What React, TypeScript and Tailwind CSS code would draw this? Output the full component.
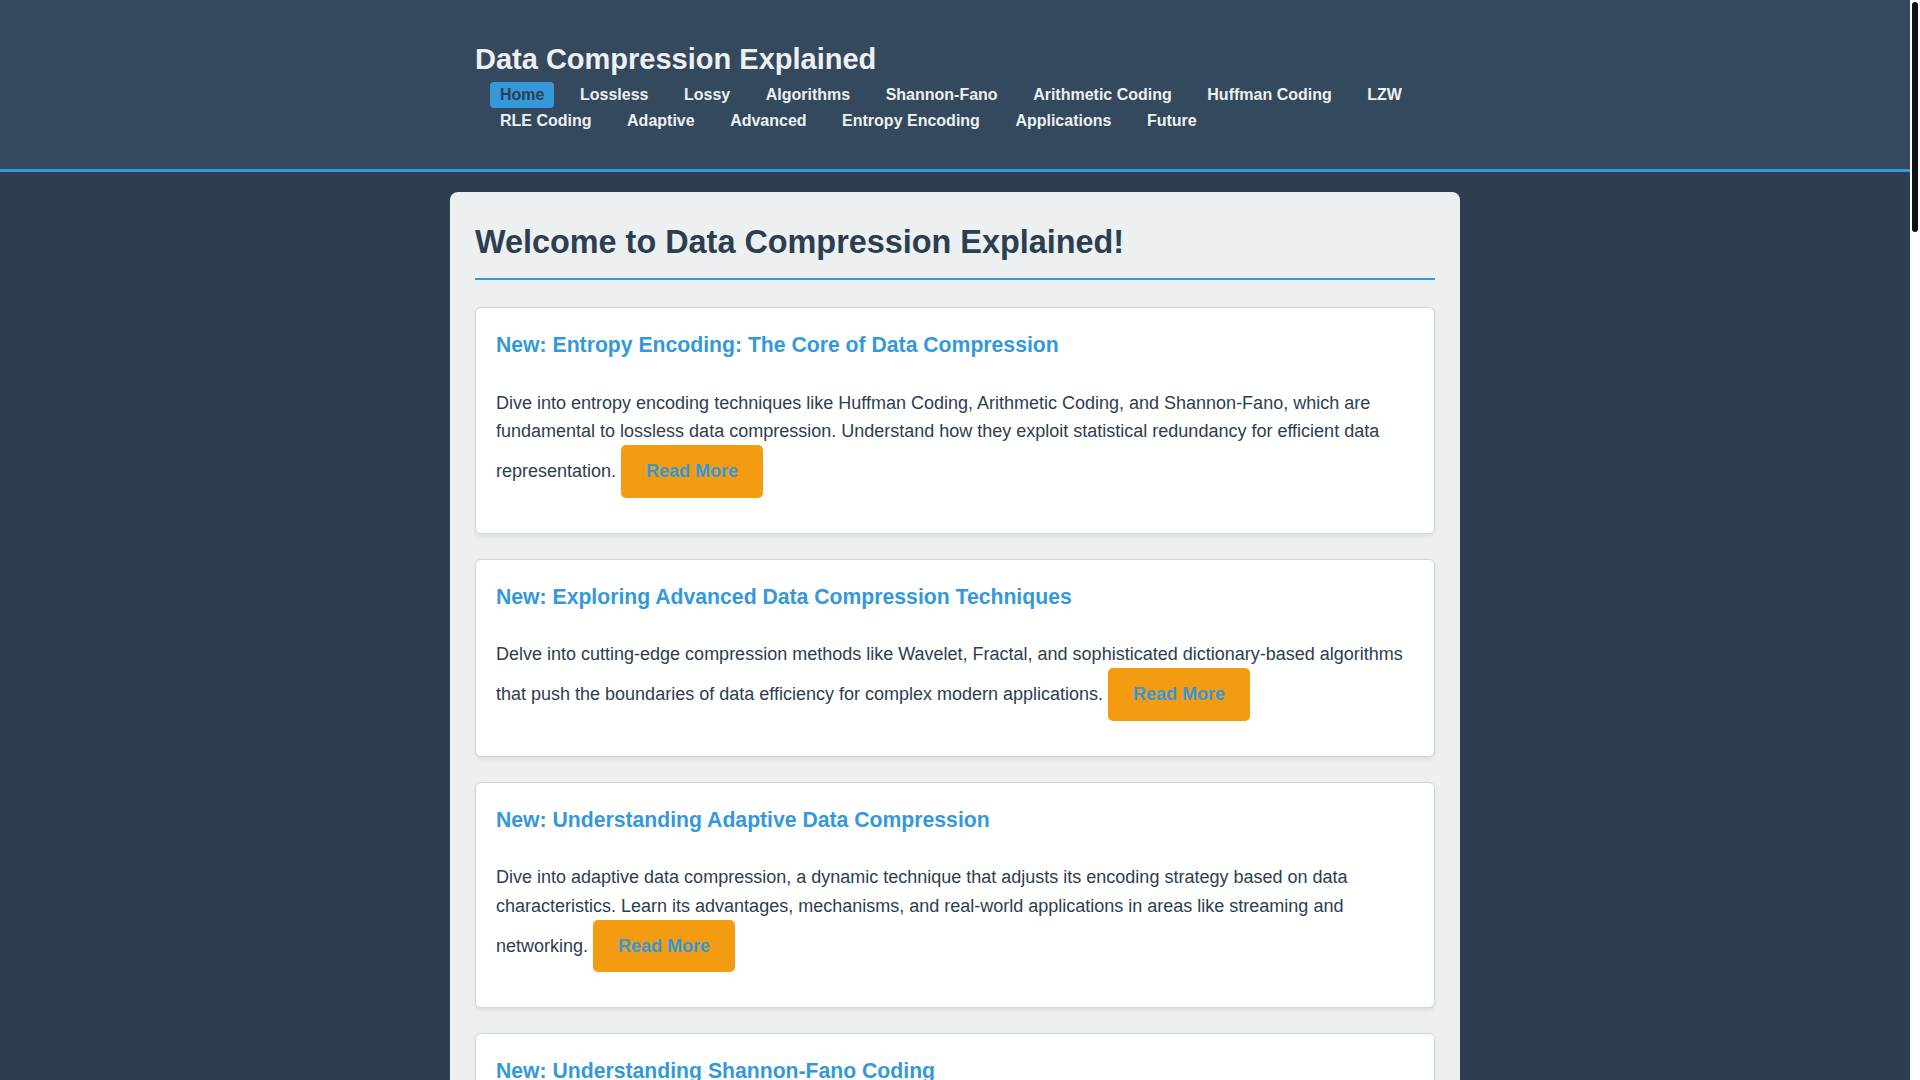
import React from 'react';

const navItems = [
  'Home',
  'Lossless',
  'Lossy',
  'Algorithms',
  'Shannon-Fano',
  'Arithmetic Coding',
  'Huffman Coding',
  'LZW',
  'RLE Coding',
  'Adaptive',
  'Advanced',
  'Entropy Encoding',
  'Applications',
  'Future',
];

const articles = [
  {
    title: 'New: Entropy Encoding: The Core of Data Compression',
    text: 'Dive into entropy encoding techniques like Huffman Coding, Arithmetic Coding, and Shannon-Fano, which are fundamental to lossless data compression. Understand how they exploit statistical redundancy for efficient data representation.',
  },
  {
    title: 'New: Exploring Advanced Data Compression Techniques',
    text: 'Delve into cutting-edge compression methods like Wavelet, Fractal, and sophisticated dictionary-based algorithms that push the boundaries of data efficiency for complex modern applications.',
  },
  {
    title: 'New: Understanding Adaptive Data Compression',
    text: 'Dive into adaptive data compression, a dynamic technique that adjusts its encoding strategy based on data characteristics. Learn its advantages, mechanisms, and real-world applications in areas like streaming and networking.',
  },
  {
    title: 'New: Understanding Shannon-Fano Coding',
    text: 'Discover Shannon-Fano coding, one of the earliest prefix-code algorithms. See how it splits symbols by probability to build efficient binary codes and how it compares with Huffman Coding.',
  },
  {
    title: 'New: A Closer Look at LZW Compression',
    text: 'Learn how the Lempel-Ziv-Welch algorithm builds a dictionary on the fly, powering formats like GIF and TIFF with simple yet effective lossless compression.',
  },
];

const ArticleCard: React.FC<{ title: string; text: string }> = ({ title, text }) => (
  <div className="mb-[25px] rounded-[6px] border border-[#d3d6d9] bg-white px-[20px] pt-[20px] pb-[20px] shadow-[0_2px_4px_rgba(0,0,0,0.08)]">
    <h3 className="mb-[27px] text-[21.2px] font-bold leading-[33.6px] text-[#3498db]">{title}</h3>
    <p className="mb-[15px] text-[18px] leading-[28.2px] text-[#2c3e50]">
      {text}{' '}
      <a
        href="#"
        className="inline-block rounded-[5px] bg-[#f39c12] px-[25px] py-[12px] text-[18px] font-bold leading-[28.5px] text-[#3498db]"
      >
        Read More
      </a>
    </p>
  </div>
);

export default function App() {
  return (
    <div className="min-h-screen bg-[#2c3e50] pr-[10px] font-['Liberation_Sans',Arial,sans-serif] text-[#2c3e50]">
      <header className="border-b-[3px] border-[#3498db] bg-[#34495e]">
        <div className="mx-auto w-[1010px] px-[25px] pt-[37px] pb-[35px]">
          <h1 className="h-[45px] text-[29px] font-bold leading-[45px] text-[#ecf0f1]">
            Data Compression Explained
          </h1>
          <nav className="ml-[15px] flex flex-wrap gap-x-[15.5px]">
            {navItems.map((item) => (
              <a
                key={item}
                href="#"
                className={
                  item === 'Home'
                    ? 'h-[26px] rounded-[4px] bg-[#3498db] px-[10px] text-[16px] font-bold leading-[26px] text-[#2c3e50]'
                    : 'h-[26px] px-[10px] text-[16px] font-bold leading-[26px] text-[#ecf0f1]'
                }
              >
                {item}
              </a>
            ))}
          </nav>
        </div>
      </header>

      <main className="mx-auto mt-[20px] w-[1010px] rounded-t-[8px] bg-[#ecf0f1] px-[25px] pt-[25px] pb-[10px]">
        <h2 className="mb-[27px] border-b-2 border-[#3498db] pb-[11px] text-[32.4px] font-bold leading-[50px] text-[#2c3e50]">
          Welcome to Data Compression Explained!
        </h2>
        {articles.map((a) => (
          <ArticleCard key={a.title} title={a.title} text={a.text} />
        ))}
      </main>

      {/* browser scrollbar as seen in the screenshot */}
      <div className="fixed top-0 right-0 h-screen w-[10px] bg-white">
        <div className="mt-[2px] ml-[2px] h-[230px] w-[6px] rounded-full bg-[#111111]" />
      </div>
    </div>
  );
}
